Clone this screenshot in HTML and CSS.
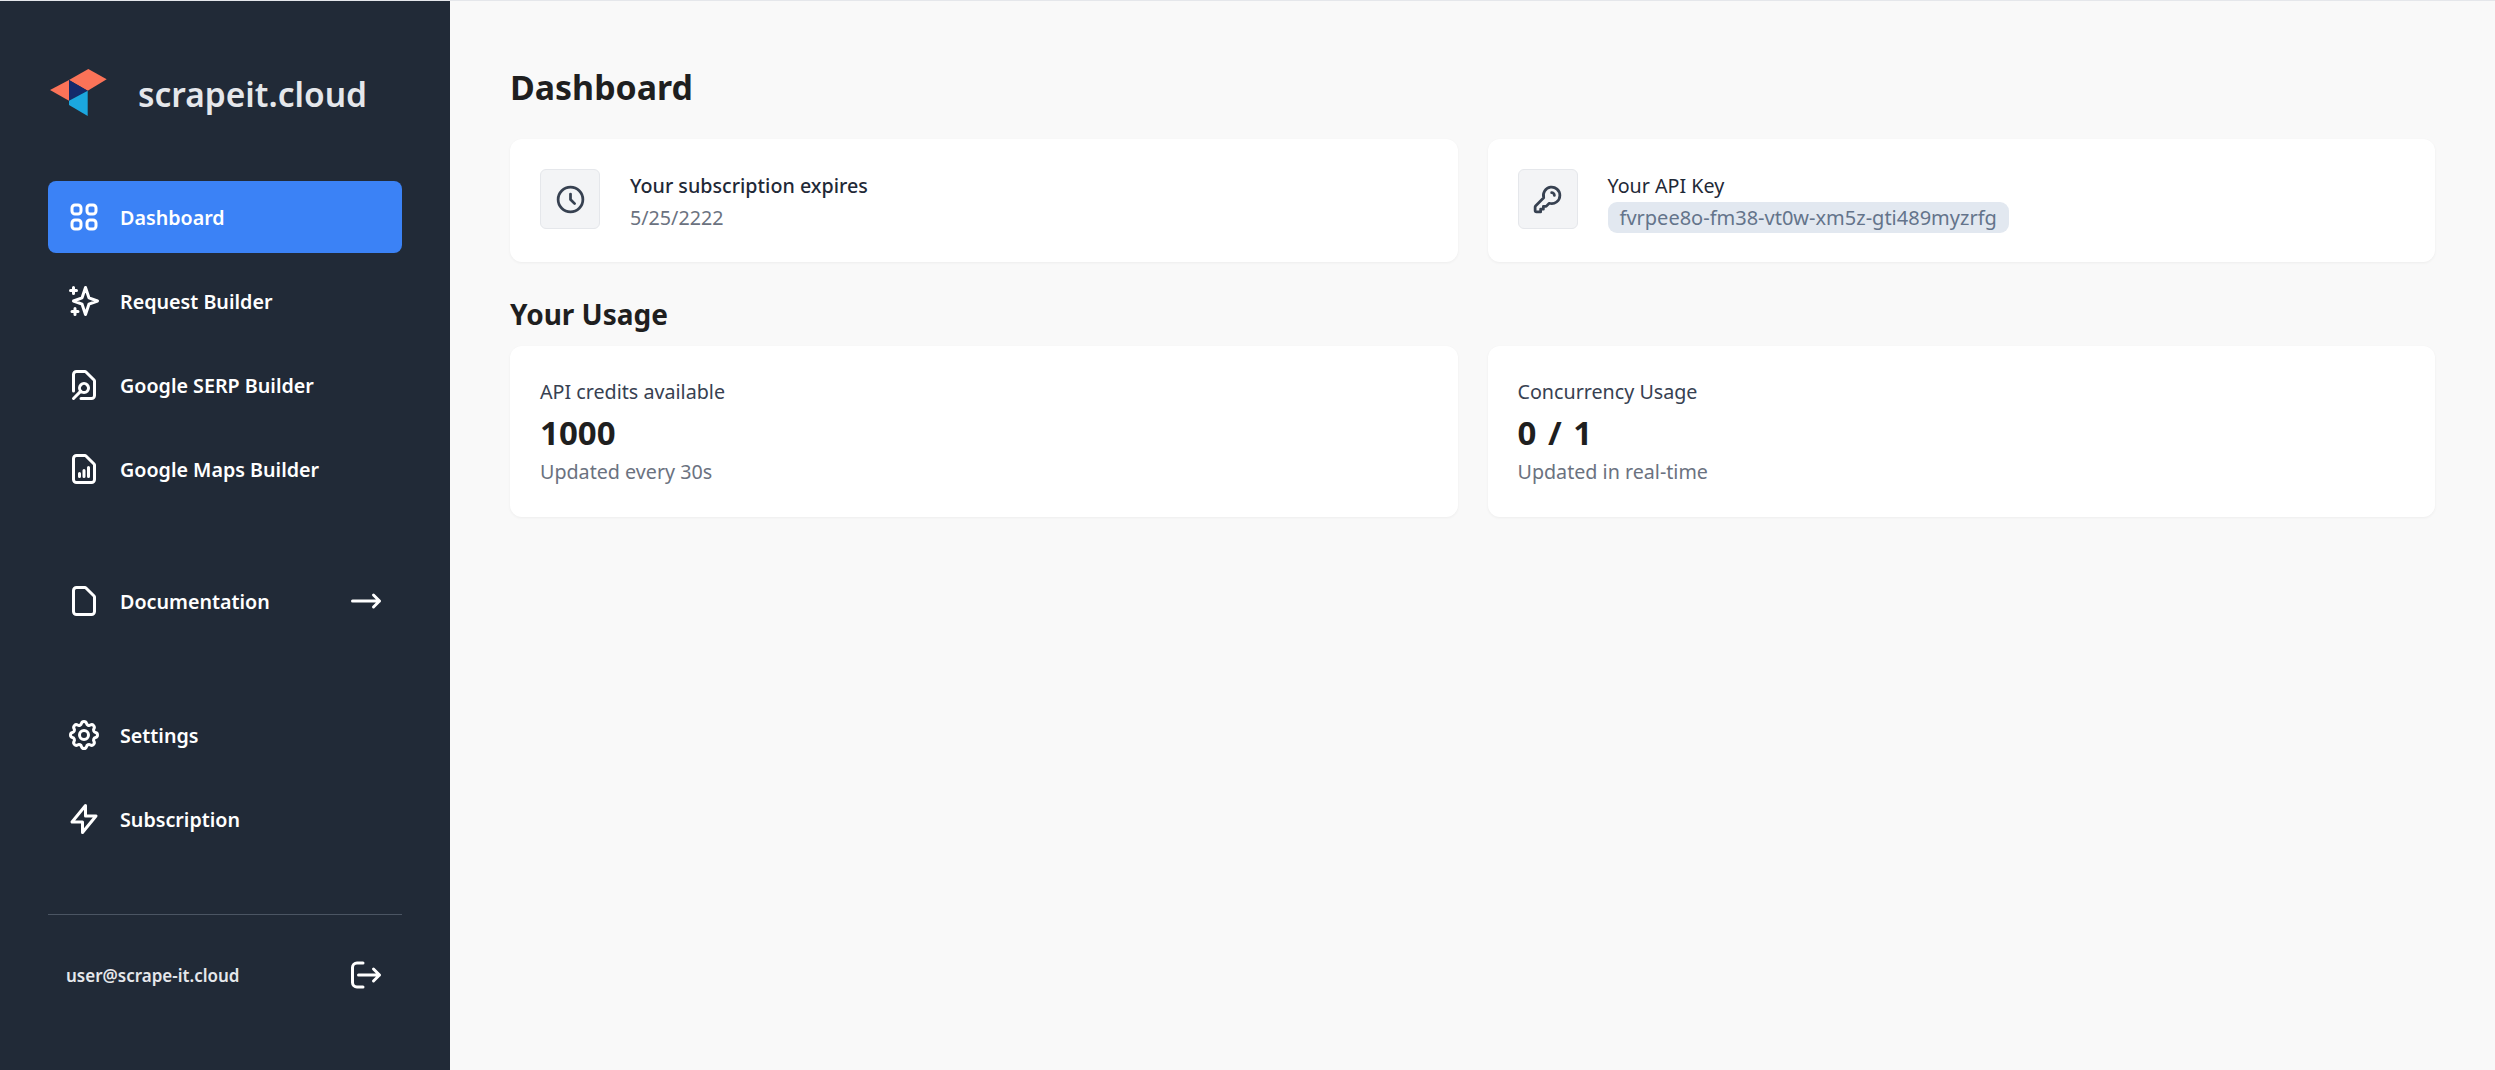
FILE: index.html
```html
<!DOCTYPE html>
<html lang="en">
<head>
<meta charset="utf-8">
<title>Dashboard - scrapeit.cloud</title>
<link rel="stylesheet" href="styles.css">
</head>
<body>
<div class="app">
  <aside class="sidebar">
    <div class="brand">
      <svg class="logo" viewBox="0 0 58 50" width="58" height="50">
        <polygon points="38.300,2 56.700,12.300 37.700,23.700 19,13" fill="#fb7358"/>
        <polygon points="0,23 19,13 19,33.700" fill="#fb7358"/>
        <polygon points="19,13 37.700,23.700 19,33.700" fill="#14296b"/>
        <polygon points="37.700,23.700 37.700,49 19,38 19,33.700" fill="#1ba7e0"/>
      </svg>
      <span class="brand-name">scrapeit.cloud</span>
    </div>

    <nav class="nav-group">
      <a class="nav-item active">
        <svg class="icon" viewBox="0 0 24 24"><path d="M4 6a2 2 0 012-2h2a2 2 0 012 2v2a2 2 0 01-2 2H6a2 2 0 01-2-2V6zM14 6a2 2 0 012-2h2a2 2 0 012 2v2a2 2 0 01-2 2h-2a2 2 0 01-2-2V6zM4 16a2 2 0 012-2h2a2 2 0 012 2v2a2 2 0 01-2 2H6a2 2 0 01-2-2v-2zM14 16a2 2 0 012-2h2a2 2 0 012 2v2a2 2 0 01-2 2h-2a2 2 0 01-2-2v-2z"/></svg>
        <span class="nav-label">Dashboard</span>
      </a>
      <a class="nav-item">
        <svg class="icon" viewBox="0 0 24 24"><path d="M5 3v4M3 5h4M6 17v4m-2-2h4m5-16l2.286 6.857L21 12l-5.714 2.143L13 21l-2.286-6.857L5 12l5.714-2.143L13 3z"/></svg>
        <span class="nav-label">Request Builder</span>
      </a>
      <a class="nav-item">
        <svg class="icon" viewBox="0 0 24 24"><path d="M10 21h7a2 2 0 002-2V9.414a1 1 0 00-.293-.707l-5.414-5.414A1 1 0 0012.586 3H7a2 2 0 00-2 2v11m0 5l4.879-4.879m0 0a3 3 0 104.243-4.242 3 3 0 00-4.243 4.242z"/></svg>
        <span class="nav-label">Google SERP Builder</span>
      </a>
      <a class="nav-item">
        <svg class="icon" viewBox="0 0 24 24"><path d="M9 17v-2m3 2v-4m3 4v-6m2 10H7a2 2 0 01-2-2V5a2 2 0 012-2h5.586a1 1 0 01.707.293l5.414 5.414a1 1 0 01.293.707V19a2 2 0 01-2 2z"/></svg>
        <span class="nav-label">Google Maps Builder</span>
      </a>
    </nav>

    <nav class="nav-group docs">
      <a class="nav-item">
        <svg class="icon" viewBox="0 0 24 24"><path d="M7 21h10a2 2 0 002-2V9.414a1 1 0 00-.293-.707l-5.414-5.414A1 1 0 0012.586 3H7a2 2 0 00-2 2v14a2 2 0 002 2z"/></svg>
        <span class="nav-label grow">Documentation</span>
        <svg class="icon" viewBox="0 0 24 24"><path d="M17 8l4 4m0 0l-4 4m4-4H3"/></svg>
      </a>
    </nav>

    <nav class="nav-group account">
      <a class="nav-item">
        <svg class="icon" viewBox="0 0 24 24"><path d="M10.325 4.317c.426-1.756 2.924-1.756 3.350 0a1.724 1.724 0 002.573 1.066c1.543-.940 3.310.826 2.370 2.370a1.724 1.724 0 001.065 2.572c1.756.426 1.756 2.924 0 3.350a1.724 1.724 0 00-1.066 2.573c.940 1.543-.826 3.310-2.370 2.370a1.724 1.724 0 00-2.572 1.065c-.426 1.756-2.924 1.756-3.350 0a1.724 1.724 0 00-2.573-1.066c-1.543.940-3.310-.826-2.370-2.370a1.724 1.724 0 00-1.065-2.572c-1.756-.426-1.756-2.924 0-3.350a1.724 1.724 0 001.066-2.573c-.940-1.543.826-3.310 2.370-2.370.996.608 2.296.070 2.572-1.065z"/><circle cx="12" cy="12" r="3"/></svg>
        <span class="nav-label">Settings</span>
      </a>
      <a class="nav-item">
        <svg class="icon" viewBox="0 0 24 24"><path d="M13 10V3L4 14h7v7l9-11h-7z"/></svg>
        <span class="nav-label">Subscription</span>
      </a>
    </nav>

    <div class="user-row">
      <span class="user-email">user@scrape-it.cloud</span>
      <svg class="icon" viewBox="0 0 24 24"><path d="M17 16l4-4m0 0l-4-4m4 4H7"/><path d="M10 20H6a3 3 0 01-3-3V7a3 3 0 013-3h4"/></svg>
    </div>
  </aside>

  <main class="main">
    <h1 class="page-title">Dashboard</h1>
    <section class="card-grid">
      <div class="card info-card">
        <div class="icon-box">
          <svg class="box-icon" viewBox="0 0 24 24"><path d="M12 8v4l3 3m6-3a9 9 0 11-18 0 9 9 0 0118 0z"/></svg>
        </div>
        <div class="info-text">
          <div class="info-title">Your subscription expires</div>
          <div class="muted">5/25/2222</div>
        </div>
      </div>
      <div class="card info-card">
        <div class="icon-box">
          <svg class="box-icon" viewBox="0 0 24 24"><path d="M15 7a2 2 0 012 2m4 0a6 6 0 01-7.743 5.743L11 17H9v2H7v2H4a1 1 0 01-1-1v-2.586a1 1 0 01.293-.707l5.964-5.964A6 6 0 1121 9z"/></svg>
        </div>
        <div class="info-text">
          <div class="key-title">Your API Key</div>
          <span class="api-key">fvrpee8o-fm38-vt0w-xm5z-gti489myzrfg</span>
        </div>
      </div>
    </section>

    <h2 class="section-title">Your Usage</h2>
    <section class="card-grid">
      <div class="card">
        <div class="stat-label">API credits available</div>
        <div class="stat-value">1000</div>
        <div class="muted">Updated every 30s</div>
      </div>
      <div class="card">
        <div class="stat-label">Concurrency Usage</div>
        <div class="stat-value">0 / 1</div>
        <div class="muted">Updated in real-time</div>
      </div>
    </section>
  </main>
</div>
</body>
</html>
```

FILE: styles.css
```css
* { box-sizing: border-box; }

html, body { margin: 0; height: 100%; }

body {
  font-family: "Noto Sans", "Open Sans", sans-serif;
  font-size: 19.700px;
  line-height: 31.500px;
  color: #1f2937;
  background: #f9f9f9;
  border-top: 1px solid #e5e7eb;
}

.app { display: flex; height: 1069px; }

.sidebar {
  width: 450px;
  flex: none;
  background: #212a37;
  padding: 66px 48px 0;
  display: flex;
  flex-direction: column;
  color: #fff;
}

.brand {
  display: flex;
  align-items: center;
  gap: 30px;
  padding-left: 2px;
  height: 50px;
  margin-bottom: 64px;
}

.logo { flex: none; }

.brand-name {
  font-size: 33.500px;
  font-weight: 600;
  color: #e5e7eb;
  line-height: 40px;
  padding-top: 3px;
}

.nav-group { display: flex; flex-direction: column; gap: 12px; }

.docs { margin-top: 60px; }
.account { margin-top: 62px; }

.nav-item {
  display: flex;
  align-items: center;
  gap: 18px;
  height: 72px;
  padding: 0 18px;
  border-radius: 8px;
  color: #fff;
}

.nav-item.active { background: #3b82f6; }

.nav-label {
  font-weight: 600;
  font-size: 19.700px;
  padding-top: 2px;
}

.grow { flex: 1; }

.icon {
  width: 36px;
  height: 36px;
  flex: none;
  fill: none;
  stroke: #fff;
  stroke-width: 2;
  stroke-linecap: round;
  stroke-linejoin: round;
}

.user-row {
  margin-top: 59px;
  border-top: 1px solid #4b5563;
  padding: 42px 18px 0;
  display: flex;
  align-items: center;
  justify-content: space-between;
}

.user-email {
  font-size: 17px;
  font-weight: 600;
  color: #e5e7eb;
  padding-top: 1px;
}

.main {
  flex: 1;
  padding: 0 60px;
}

.page-title {
  margin: 60px 0 26px;
  font-size: 33.900px;
  line-height: 52px;
  font-weight: 700;
  color: #1f1f1f;
}

.card-grid {
  display: grid;
  grid-template-columns: 1fr 1fr;
  gap: 30px;
}

.card {
  background: #fff;
  border-radius: 12px;
  padding: 30px;
  box-shadow: 0 1px 3px rgba(0, 0, 0, .05);
}

.info-card { display: flex; align-items: flex-start; gap: 30px; height: 123px; }

.info-text { padding-top: 1px; }

.icon-box {
  width: 60px;
  height: 60px;
  flex: none;
  display: flex;
  align-items: center;
  justify-content: center;
  background: #f3f4f6;
  border: 1px solid #e5e7eb;
  border-radius: 6px;
}

.box-icon {
  width: 33px;
  height: 33px;
  fill: none;
  stroke: #374151;
  stroke-width: 2;
  stroke-linecap: round;
  stroke-linejoin: round;
}

.info-title { font-weight: 500; color: #1f2937; }
.key-title { color: #1f2937; }

.muted { color: #6b7280; }

.api-key {
  display: inline-block;
  font-size: 20px;
  background: #e2e8f0;
  color: #64748b;
  border-radius: 9px;
  padding: 0 12px;
  line-height: 31px;
}

.section-title {
  margin: 32px 0 12px;
  font-size: 28px;
  line-height: 40px;
  font-weight: 700;
  color: #1f1f1f;
}

.stat-label { color: #374151; }

.stat-value {
  font-size: 33px;
  line-height: 46px;
  padding-top: 2px;
  font-weight: 700;
  word-spacing: 3px;
  color: #1f1f1f;
}
```
